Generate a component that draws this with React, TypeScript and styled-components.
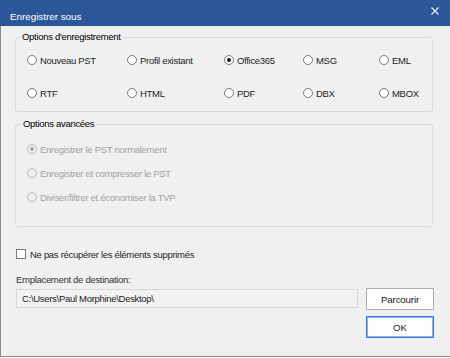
import React from 'react';
import styled, { createGlobalStyle } from 'styled-components';

const GlobalStyle = createGlobalStyle`
  html, body {
    margin: 0;
    padding: 0;
    background: #ffffff;
  }
  * {
    box-sizing: border-box;
  }
`;

const Window = styled.div`
  width: 450px;
  height: 357px;
  background: #f0f0f0;
  border-left: 1px solid #8a8a8a;
  border-bottom: 1px solid #8a8a8a;
  font-family: 'Liberation Sans', Arial, sans-serif;
  font-size: 9.5px;
  letter-spacing: -0.3px;
  color: #1e1e1e;
  display: flex;
  flex-direction: column;
`;

const TitleBar = styled.div`
  height: 26px;
  margin-left: -1px;
  background: #2b579a;
  color: #ffffff;
  display: flex;
  justify-content: space-between;
  align-items: flex-start;
  padding: 11px 11px 0 10px;
`;

const TitleText = styled.span`
  font-size: 9.8px;
  letter-spacing: 0;
  line-height: 12px;
`;

const CloseIcon = styled.svg`
  margin-top: -4px;
`;

const Body = styled.div`
  padding: 0 16px 0 14px;
  display: flex;
  flex-direction: column;
`;

const Group = styled.fieldset<{ $top: number }>`
  margin: ${({ $top }) => $top}px 1px 0 0;
  padding: 0;
  border: 1px solid #dadada;
  border-radius: 3px;
  min-width: 0;
`;

const Legend = styled.legend<{ $offset: number }>`
  margin-left: ${({ $offset }) => $offset}px;
  padding: 0 2px;
  line-height: 12px;
  color: #000000;
`;

const FormatGrid = styled.div`
  display: grid;
  grid-template-columns: 100px 97px 79px 76px 1fr;
  row-gap: 17px;
  padding: 9px 0 10px 11px;
`;

const AdvancedList = styled.div`
  display: flex;
  flex-direction: column;
  gap: 8px;
  padding: 11px 0 21px 11px;
`;

const Option = styled.label<{ $disabled?: boolean }>`
  display: flex;
  align-items: center;
  height: 16px;
  gap: 3px;
  white-space: nowrap;
  color: ${({ $disabled }) => ($disabled ? '#a3a3a3' : '#1e1e1e')};
`;

const RadioMark = styled.span<{ $checked?: boolean; $disabled?: boolean }>`
  width: 10px;
  height: 10px;
  border-radius: 50%;
  border: 1px solid ${({ $disabled }) => ($disabled ? '#bdbdbd' : '#7a7a7a')};
  background: ${({ $disabled }) => ($disabled ? '#f0f0f0' : '#ffffff')};
  display: flex;
  align-items: center;
  justify-content: center;
  flex-shrink: 0;

  &::after {
    content: '';
    width: 4px;
    height: 4px;
    border-radius: 50%;
    background: ${({ $disabled }) => ($disabled ? '#a8a8a8' : '#1a1a1a')};
    display: ${({ $checked }) => ($checked ? 'block' : 'none')};
  }
`;

const CheckRow = styled.label`
  display: flex;
  align-items: center;
  height: 14px;
  gap: 4px;
  margin-top: 20px;
  margin-left: 1px;
`;

const CheckMark = styled.span`
  width: 10px;
  height: 10px;
  border: 1px solid #7a7a7a;
  background: #ffffff;
  flex-shrink: 0;
`;

const FieldLabel = styled.div`
  margin-top: 12px;
  margin-left: 1px;
  line-height: 14px;
  color: #333333;
`;

const PathRow = styled.div`
  display: flex;
  align-items: flex-start;
  gap: 8px;
  margin-top: 1px;
`;

const PathInput = styled.div`
  flex: 1;
  height: 19px;
  margin-top: 1px;
  margin-left: 1px;
  border: 1px solid #d7d7d7;
  background: #f2f2f2;
  padding: 0 5px;
  display: flex;
  align-items: center;
  color: #222222;
`;

const Button = styled.button<{ $primary?: boolean }>`
  width: 68px;
  height: 22px;
  padding: 0;
  font-family: inherit;
  font-size: 9.8px;
  letter-spacing: -0.2px;
  color: #1e1e1e;
  background: #fdfdfd;
  border: 1px solid ${({ $primary }) => ($primary ? '#3a78d4' : '#adadad')};
  box-shadow: ${({ $primary }) => ($primary ? 'inset 0 0 0 1px #8db4ea' : 'none')};
  flex-shrink: 0;
`;

const Actions = styled.div`
  display: flex;
  justify-content: flex-end;
  margin-top: 6px;
`;

const formats = [
  { label: 'Nouveau PST' },
  { label: 'Profil existant' },
  { label: 'Office365', checked: true },
  { label: 'MSG' },
  { label: 'EML' },
  { label: 'RTF' },
  { label: 'HTML' },
  { label: 'PDF' },
  { label: 'DBX' },
  { label: 'MBOX' },
];

const advanced = [
  { label: 'Enregistrer le PST normalement', checked: true },
  { label: 'Enregistrer et compresser le PST' },
  { label: 'Diviser/filtrer et économiser la TVP' },
];

const App: React.FC = () => {
  return (
    <>
      <GlobalStyle />
      <Window>
        <TitleBar>
          <TitleText>Enregistrer sous</TitleText>
          <CloseIcon width="8" height="8" viewBox="0 0 8 8">
            <path d="M0.5 0.5 L7.5 7.5 M7.5 0.5 L0.5 7.5" stroke="#e8eef7" strokeWidth="1.2" />
          </CloseIcon>
        </TitleBar>

        <Body>
          <Group $top={5}>
            <Legend $offset={4}>Options d'enregistrement</Legend>
            <FormatGrid>
              {formats.map((f) => (
                <Option key={f.label}>
                  <RadioMark $checked={f.checked} />
                  {f.label}
                </Option>
              ))}
            </FormatGrid>
          </Group>

          <Group $top={6}>
            <Legend $offset={5}>Options avancées</Legend>
            <AdvancedList>
              {advanced.map((a) => (
                <Option key={a.label} $disabled>
                  <RadioMark $checked={a.checked} $disabled />
                  {a.label}
                </Option>
              ))}
            </AdvancedList>
          </Group>

          <CheckRow>
            <CheckMark />
            Ne pas récupérer les éléments supprimés
          </CheckRow>

          <FieldLabel>Emplacement de destination:</FieldLabel>

          <PathRow>
            <PathInput>C:\Users\Paul Morphine\Desktop\</PathInput>
            <Button>Parcourir</Button>
          </PathRow>

          <Actions>
            <Button $primary>OK</Button>
          </Actions>
        </Body>
      </Window>
    </>
  );
};

export default App;
